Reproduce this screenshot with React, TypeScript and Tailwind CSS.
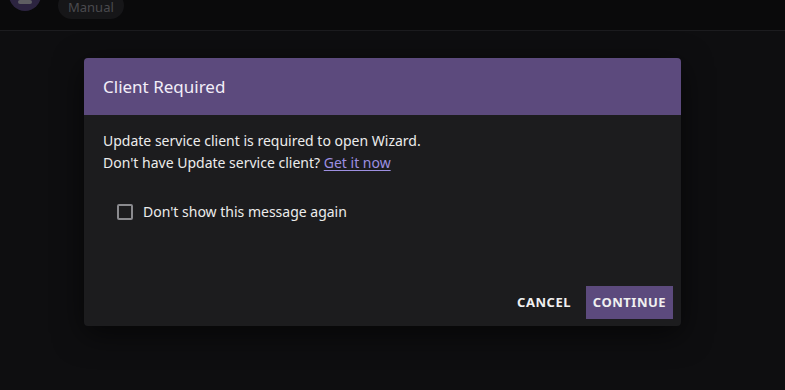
export default function App() {
  return (
    <div
      className="relative h-[390px] w-[785px] overflow-hidden bg-[#0e0e10]"
      style={{ fontFamily: '"Noto Sans", "Open Sans", sans-serif' }}
    >
      {/* Top bar (behind the overlay) */}
      <div className="flex h-[31px] items-start gap-[17px] border-b border-[#1c1c1f] bg-[#0a0a0b] pl-[9px]">
        <div className="-mt-[21px] flex h-[32px] w-[32px] items-end justify-center rounded-full bg-[#2c2440] pb-[7px]">
          <div className="h-[4px] w-[14px] rounded-sm bg-[#5e5e62]" />
        </div>
        <div className="-mt-[8px] flex h-[27px] items-center rounded-full bg-[#161618] px-[10px] pt-[4px] text-[13px] text-[#4a4a4e]">
          Manual
        </div>
      </div>

      {/* Dialog */}
      <div className="absolute left-[84px] top-[58px] w-[597px] overflow-hidden rounded-[4px] bg-[#1c1c1e] shadow-[0_8px_30px_rgba(0,0,0,0.6)]">
        <div className="flex h-[57px] items-center bg-[#5c4a7d] px-[19px] text-[17px] text-[#f2eef8]">
          Client Required
        </div>
        <div className="px-[19px] pt-[15px] text-[14px] leading-[22px] text-[#ececec]">
          <p>Update service client is required to open Wizard.</p>
          <p>
            Don't have Update service client?{" "}
            <a href="#" className="text-[#9d8fe0] underline underline-offset-2">
              Get it now
            </a>
          </p>
          <label className="mt-[27px] flex items-center gap-[10px] pl-[14px]">
            <span className="h-[16px] w-[16px] rounded-[2px] border-2 border-[#8a8a8e]" />
            <span>Don't show this message again</span>
          </label>
        </div>
        <div className="flex items-center justify-end gap-[14px] px-[8px] pb-[7px] pt-[63px]">
          <button className="px-[1px] text-[13px] font-bold tracking-[0.04em] text-[#f0f0f0]">CANCEL</button>
          <button className="h-[33px] w-[87px] bg-[#5c4a7d] text-[13px] font-bold tracking-[0.04em] text-[#f0f0f0]">
            CONTINUE
          </button>
        </div>
      </div>
    </div>
  );
}
